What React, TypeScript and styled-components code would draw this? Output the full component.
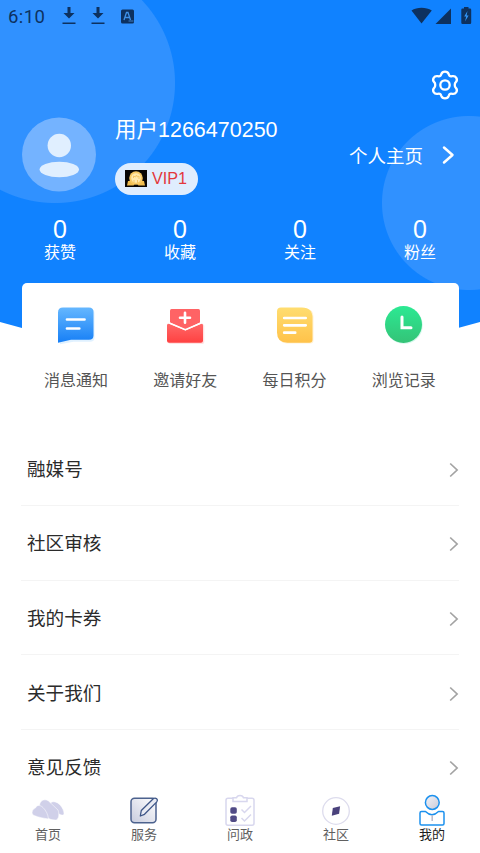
import React from 'react';
import styled, { createGlobalStyle } from 'styled-components';

const Global = createGlobalStyle`
  * { box-sizing: border-box; }
  body { margin: 0; background: #fff; font-family: "Liberation Sans", "Noto Sans CJK SC", sans-serif; }
  svg { display: block; flex: none; }
`;

const Page = styled.div`
  width: 480px;
  height: 853px;
  overflow: hidden;
  display: flex;
  flex-direction: column;
  background: #fff;
`;

const Hero = styled.header`
  flex: none;
  height: 336px;
  color: #fff;
  background:
    radial-gradient(circle at 55px 83px, #3091ff 119.5px, transparent 120.5px),
    radial-gradient(circle at 469px 203px, #3091ff 86.5px, transparent 87.5px),
    #1082ff;
  clip-path: polygon(0 0, 100% 0, 100% 322px, 458px 328px, 22px 328px, 0 322px);
`;

const StatusBar = styled.div`
  height: 32px;
  padding: 0 8px;
  display: flex;
  align-items: center;
  color: #0d315f;
  font: 400 18.5px/32px Roboto, sans-serif;
`;
const Clock = styled.span`
  width: 52px;
  padding-top: 1px;
  letter-spacing: 0.4px;
`;
const StatusIcons = styled.div<{ $end?: boolean }>`
  display: flex;
  align-items: center;
  margin-left: ${(p) => (p.$end ? 'auto' : '0')};
`;

const SettingsRow = styled.div`
  height: 83px;
  padding: 37px 20px 0 0;
  display: flex;
  justify-content: flex-end;
`;

const Profile = styled.section`
  height: 101px;
  padding: 2px 24px 0 22px;
  display: flex;
`;
const Identity = styled.div`
  flex: 1;
  padding-left: 19px;
`;
const UserName = styled.h1`
  margin: -1px 0 0;
  font-size: 21.5px;
  font-weight: 400;
  line-height: 28px;
  white-space: nowrap;
`;
const VipBadge = styled.div`
  margin: 18.5px 0 0 -0.5px;
  width: 83px;
  height: 32px;
  padding-left: 10.5px;
  border-radius: 16px;
  display: flex;
  align-items: center;
  gap: 5px;
  background: #dfedfe;
  color: #e3383c;
  font-size: 16.2px;
`;
const HomeLink = styled.div`
  height: 76px;
  display: flex;
  align-items: center;
  gap: 18px;
  font-size: 18.5px;
`;

const Columns = styled.div`
  display: grid;
  grid-template-columns: repeat(4, 1fr);
  text-align: center;
`;
const StatValue = styled.div`
  font-size: 25px;
  line-height: 26px;
`;
const StatLabel = styled.div`
  margin-top: 2px;
  font-size: 16px;
  line-height: 18px;
`;

const Card = styled.section`
  flex: none;
  margin: -53.5px 21.5px 0;
  height: 149px;
  border-radius: 5px;
  background: #fff;
  position: relative;
`;
const Shortcut = styled.div`
  padding-top: 21px;
  display: flex;
  flex-direction: column;
  align-items: center;
  gap: 22px;
  color: #555;
  font-size: 16px;
  line-height: 26px;
`;

const Menu = styled.main`
  flex: 1;
  min-height: 0;
  overflow: hidden;
  padding: 0 21px;
`;
const MenuRow = styled.div`
  height: 74.6px;
  padding: 3px 0 0 6px;
  border-bottom: 1px solid #f4f4f4;
  display: flex;
  align-items: center;
  justify-content: space-between;
  color: #2b2b2b;
  font-size: 18.6px;
  line-height: 28px;
`;

const TabBar = styled.nav`
  flex: none;
  height: 64px;
  background: #fff;
  display: grid;
  grid-template-columns: repeat(5, 1fr);
`;
const Tab = styled.div<{ $active?: boolean }>`
  display: flex;
  flex-direction: column;
  align-items: center;
  padding-top: 4px;
  color: ${(p) => (p.$active ? '#1c1c1c' : '#606060')};
  font-size: 13px;
  line-height: 16px;
`;

const Download = () => (
  <svg width="29" height="20" viewBox="0 0 29 20">
    <path d="M7.500 1h3v6h4L9 12.500 3.500 7h4zM2.500 16.500h13v1.600h-13z" fill="currentColor" />
  </svg>
);
const AppBadge = () => (
  <svg width="16" height="15" viewBox="0 0 16 15">
    <rect x="3" y="0.500" width="13" height="14" rx="1.500" fill="currentColor" />
    <path d="M6 11 8.500 3.500H10L12.500 11M7.500 8.500h4" fill="none" stroke="#3f91e8" strokeWidth="1.300" />
    <path d="M10.500 12h5" stroke="#3f80c8" strokeWidth="1" />
  </svg>
);
const DeviceIcons = () => (
  <svg width="62" height="20" viewBox="0 0 62 20">
    <path d="M1.500 4.500C7 .9 16 .9 21.800 4.500L11.500 17.500z" fill="currentColor" />
    <path d="M41 2.500V18H25.500z" fill="currentColor" />
    <path d="M54 1h4.500v1.500H60q1.200 0 1.200 1.200v13q0 1.300-1.200 1.300h-7.500q-1.200 0-1.200-1.300v-13q0-1.200 1.200-1.200H54z" fill="currentColor" />
    <path d="m57.500 5-3.300 5.500h2L55 15.500l3.600-6h-2z" fill="#3297fb" />
  </svg>
);
const Gear = () => (
  <svg width="30" height="32" viewBox="0 0 30 32" fill="none" stroke="#fff" strokeWidth="2.300">
    <path
      strokeLinejoin="round"
      d="M11.300 5.200C12 3.200 12.800 2.700 15 2.700s3 .5 3.700 2.500c.5 1.700 1.800 2.400 3.400 2 2.300-.5 3.100-.2 4.200 1.600 1.100 1.900 1 2.900-.5 4.300-1.400 1.300-1.400 4.500 0 5.800 1.500 1.400 1.600 2.400.5 4.300-1.100 1.800-1.900 2.100-4.200 1.600-1.600-.4-2.900.3-3.400 2-.7 2-1.500 2.500-3.700 2.500s-3-.5-3.700-2.500c-.5-1.700-1.800-2.400-3.400-2-2.300.5-3.100.2-4.200-1.600-1.100-1.900-1-2.900.5-4.300 1.400-1.300 1.400-4.500 0-5.800-1.500-1.400-1.600-2.400-.5-4.300 1.100-1.800 1.900-2.100 4.200-1.600 1.600.4 2.900-.3 3.400-2z"
    />
    <circle cx="15" cy="16" r="4.700" />
  </svg>
);
const Avatar = () => (
  <svg width="74" height="75" viewBox="0 0 74 75">
    <circle cx="37" cy="37.500" r="37" fill="#74b3ff" />
    <circle cx="37.300" cy="28.500" r="11.700" fill="#e0efff" />
    <ellipse cx="37.300" cy="52.500" rx="19.700" ry="7.700" fill="#e0efff" />
  </svg>
);
const Medal = () => (
  <svg width="22" height="17" viewBox="0 0 22 17">
    <path d="M0 0h22v17H0z" fill="#080604" />
    <path d="M3 11h16l1 4.500h-6.500L12 14h-2l-1.500 1.500H2z" fill="#f1be50" />
    <circle cx="11" cy="8" r="6.800" fill="#f8ca65" />
    <circle cx="11" cy="8" r="4.800" fill="#ffe9ae" />
    <path d="M8.500 8V6l2 1 1-2 1 2 1.500-1v3M9 10v3M12.500 10v3" stroke="#f5c766" fill="none" />
  </svg>
);
const Chevron = ({ bold }: { bold?: boolean }) => (
  <svg width={bold ? 15 : 10} height={bold ? 20 : 16} viewBox={bold ? '0 0 15 20' : '0 0 10 16'} fill="none">
    {bold ? (
      <path d="m3 2.500 8.500 7.500L3 17.500" stroke="#fff" strokeWidth="2.500" strokeLinecap="round" strokeLinejoin="round" />
    ) : (
      <path d="m1.200 1.500 6.900 6.500-6.900 6.500" stroke="#a3a3a3" strokeWidth="1.700" />
    )}
  </svg>
);

const Gradient = ({ id, from, to }: { id: string; from: string; to: string }) => (
  <linearGradient id={id} x1="0" y1="0" x2="0" y2="1">
    <stop stopColor={from} />
    <stop offset="1" stopColor={to} />
  </linearGradient>
);
const MessageIcon = () => (
  <svg width="42" height="42" viewBox="-0.5 0 42 42">
    <Gradient id="msg" from="#65b7ff" to="#167ff6" />
    <path d="M8 4h25.500q4.500 0 4.500 4.500v24.500q0 4-4.500 4H17L3.500 39.500V8.500Q3.500 4 8 4z" fill="#e0f1ff" transform="translate(1 .8)" />
    <path d="M7.500 3.500h26q4.500 0 4.500 4.500v23.500q0 4.200-4.500 4.200H15.500L2.500 38.700V8.500q0-5 5-5z" fill="url(#msg)" />
    <path d="M11.500 15.500H29M11.500 24.500h12.300" stroke="#fff" strokeWidth="2.700" strokeLinecap="round" />
  </svg>
);
const InviteIcon = () => (
  <svg width="42" height="42" viewBox="-0.5 0 42 42">
    <Gradient id="invite" from="#ff6868" to="#ff4141" />
    <path d="M7 5h27q1.500 0 1.500 1.500v12L21 25.500 5.500 18.500v-12Q5.500 5 7 5z" fill="#ff6365" />
    <path d="M4 20 21 27.500 37.500 20q1.500-.5 1.500 1.500v16q0 2-2 2H5q-2 0-2-2v-16Q3 19.500 4 20z" fill="#ffe2e2" transform="translate(.8 .6)" />
    <path d="M4.300 19.500 21 26.500 37 19.500q1.500 0 1.500 2v15.300q0 2-2 2h-32q-2 0-2-2V21.500q0-2 1.800-2z" fill="url(#invite)" />
    <path d="m3.500 18.500 17.300 7.300 17-7.300" fill="none" stroke="#fff" strokeWidth="1.500" />
    <path d="M20.500 8.800v10M15.500 13.800h10" stroke="#fff" strokeWidth="2.600" strokeLinecap="round" />
  </svg>
);
const PointsIcon = () => (
  <svg width="42" height="42" viewBox="-0.5 0 42 42">
    <Gradient id="points" from="#ffdd70" to="#ffc24a" />
    <path d="M8 4.500h24q7 1 7 8v24q0 3-3 3H12q-8-1-8-8v-23q0-4 4-4z" fill="#fff2d6" />
    <path d="M6.500 3.500h21Q38 3.500 38 14v21.500q0 3.200-3.200 3.200H13Q2.500 38.700 2.500 28.500v-21q0-4 4-4z" fill="url(#points)" />
    <path d="M9.700 14h21.500M9.700 21.300h21.500M9.700 28.700h11" stroke="#fff" strokeWidth="2.700" strokeLinecap="round" />
  </svg>
);
const HistoryIcon = () => (
  <svg width="42" height="42" viewBox="0 0 42 42">
    <Gradient id="history" from="#2ce993" to="#34c377" />
    <circle cx="21.200" cy="21.300" r="18.500" fill="#d5f8ec" />
    <circle cx="20.500" cy="20.500" r="18.500" fill="url(#history)" />
    <path d="M19 13v10.700h9" fill="none" stroke="#fff" strokeWidth="3" strokeLinecap="round" />
  </svg>
);

const CloudTab = () => (
  <svg width="34" height="34" viewBox="0 0 34 34" fill="#d0d0e9" stroke="#fff" strokeWidth=".5">
    <path d="M19.500 13q-1-4.500 3.500-4.300c5 .4 9.500 6.400 10 11.500.1 2.500-2.500 2.300-5 .8z" />
    <path d="M8.500 14C8 8 13 5 17.500 8l9.500 9c1.600 4 .8 10-2.300 10-4 0-7-1-9-3z" />
    <path d="M1 20q0-4 3.500-5c1-3 4.500-3.500 7.500-.5 3 3 5 7 5.500 11.500C11 25 5 23.500 2 22z" />
  </svg>
);
const ServiceTab = () => (
  <svg width="34" height="34" viewBox="0 0 34 34">
    <linearGradient id="service" x1="1" y1="0" x2="0" y2="1">
      <stop stopColor="#fff" />
      <stop offset="1" stopColor="#c7cbdd" />
    </linearGradient>
    <rect x="4" y="5.300" width="25" height="24.500" rx="3.500" fill="url(#service)" stroke="#4c628e" strokeWidth="1.500" />
    <path d="M13.300 23 14.300 17.500 26.500 5.500q1.800-1 3.200.3t.1 3.100L17.500 21.300z" fill="#e9ebf3" stroke="#3e5687" strokeWidth="1.300" strokeLinejoin="round" />
  </svg>
);
const PoliticsTab = () => (
  <svg width="34" height="34" viewBox="0 0 34 34" fill="none" stroke="#d8d7ee" strokeWidth="1.500">
    <rect x="3" y="5.200" width="28" height="27" rx="2" />
    <path d="M10 8.500V4.800h3.500Q14 2.500 17 2.500t3.500 2.300H24v3.700z" fill="#fff" />
    <path d="m18.500 16.500 3 3 6.500-6.500M18.500 25l3 3 6.500-6.500" />
    <g fill="#514b86" stroke="none">
      <rect x="7.300" y="14.300" width="6.500" height="6.500" rx="1.800" />
      <rect x="7.300" y="22.500" width="6.500" height="6.500" rx="1.800" />
    </g>
  </svg>
);
const CommunityTab = () => (
  <svg width="34" height="34" viewBox="0 0 34 34">
    <circle cx="17" cy="18" r="13.300" fill="#fff" stroke="#dddced" strokeWidth="1.300" />
    <path d="m13.800 15 7.300-1.700-1 7.500-7.300 2z" fill="#4a427c" />
  </svg>
);
const MineTab = () => (
  <svg width="34" height="34" viewBox="0 0 34 34" stroke="#1c91ee" strokeWidth="1.500">
    <linearGradient id="mine" x1="0" y1="0" x2="1" y2="1">
      <stop stopColor="#f4f4f8" />
      <stop offset="1" stopColor="#c9c9d7" />
    </linearGradient>
    <circle cx="17.300" cy="9.500" r="6.900" fill="url(#mine)" />
    <path d="M6.500 18.500h4Q17 25 23.500 18.500h4q1.500 0 1.500 1.500v10.500q0 1.500-1.500 1.500h-21Q5 32 5 30.500V20q0-1.500 1.500-1.500z" fill="#fff" strokeLinejoin="round" />
    <path d="M17.200 22v6" stroke="#babaca" />
  </svg>
);

const stats = ['获赞', '收藏', '关注', '粉丝'];
const shortcuts = [
  { label: '消息通知', Icon: MessageIcon },
  { label: '邀请好友', Icon: InviteIcon },
  { label: '每日积分', Icon: PointsIcon },
  { label: '浏览记录', Icon: HistoryIcon },
];
const menu = ['融媒号', '社区审核', '我的卡券', '关于我们', '意见反馈'];
const tabs = [
  { label: '首页', Icon: CloudTab },
  { label: '服务', Icon: ServiceTab },
  { label: '问政', Icon: PoliticsTab },
  { label: '社区', Icon: CommunityTab },
  { label: '我的', Icon: MineTab },
];

export default function App() {
  return (
    <Page>
      <Global />
      <Hero>
        <StatusBar>
          <Clock>6:10</Clock>
          <StatusIcons>
            <Download />
            <Download />
            <AppBadge />
          </StatusIcons>
          <StatusIcons $end>
            <DeviceIcons />
          </StatusIcons>
        </StatusBar>
        <SettingsRow>
          <Gear />
        </SettingsRow>
        <Profile>
          <Avatar />
          <Identity>
            <UserName>用户1266470250</UserName>
            <VipBadge>
              <Medal />
              VIP1
            </VipBadge>
          </Identity>
          <HomeLink>
            个人主页
            <Chevron bold />
          </HomeLink>
        </Profile>
        <Columns>
          {stats.map((label) => (
            <div key={label}>
              <StatValue>0</StatValue>
              <StatLabel>{label}</StatLabel>
            </div>
          ))}
        </Columns>
      </Hero>
      <Card>
        <Columns>
          {shortcuts.map(({ label, Icon }) => (
            <Shortcut key={label}>
              <Icon />
              {label}
            </Shortcut>
          ))}
        </Columns>
      </Card>
      <Menu>
        {menu.map((label) => (
          <MenuRow key={label}>
            {label}
            <Chevron />
          </MenuRow>
        ))}
      </Menu>
      <TabBar>
        {tabs.map(({ label, Icon }) => (
          <Tab key={label} $active={label === '我的'}>
            <Icon />
            {label}
          </Tab>
        ))}
      </TabBar>
    </Page>
  );
}
